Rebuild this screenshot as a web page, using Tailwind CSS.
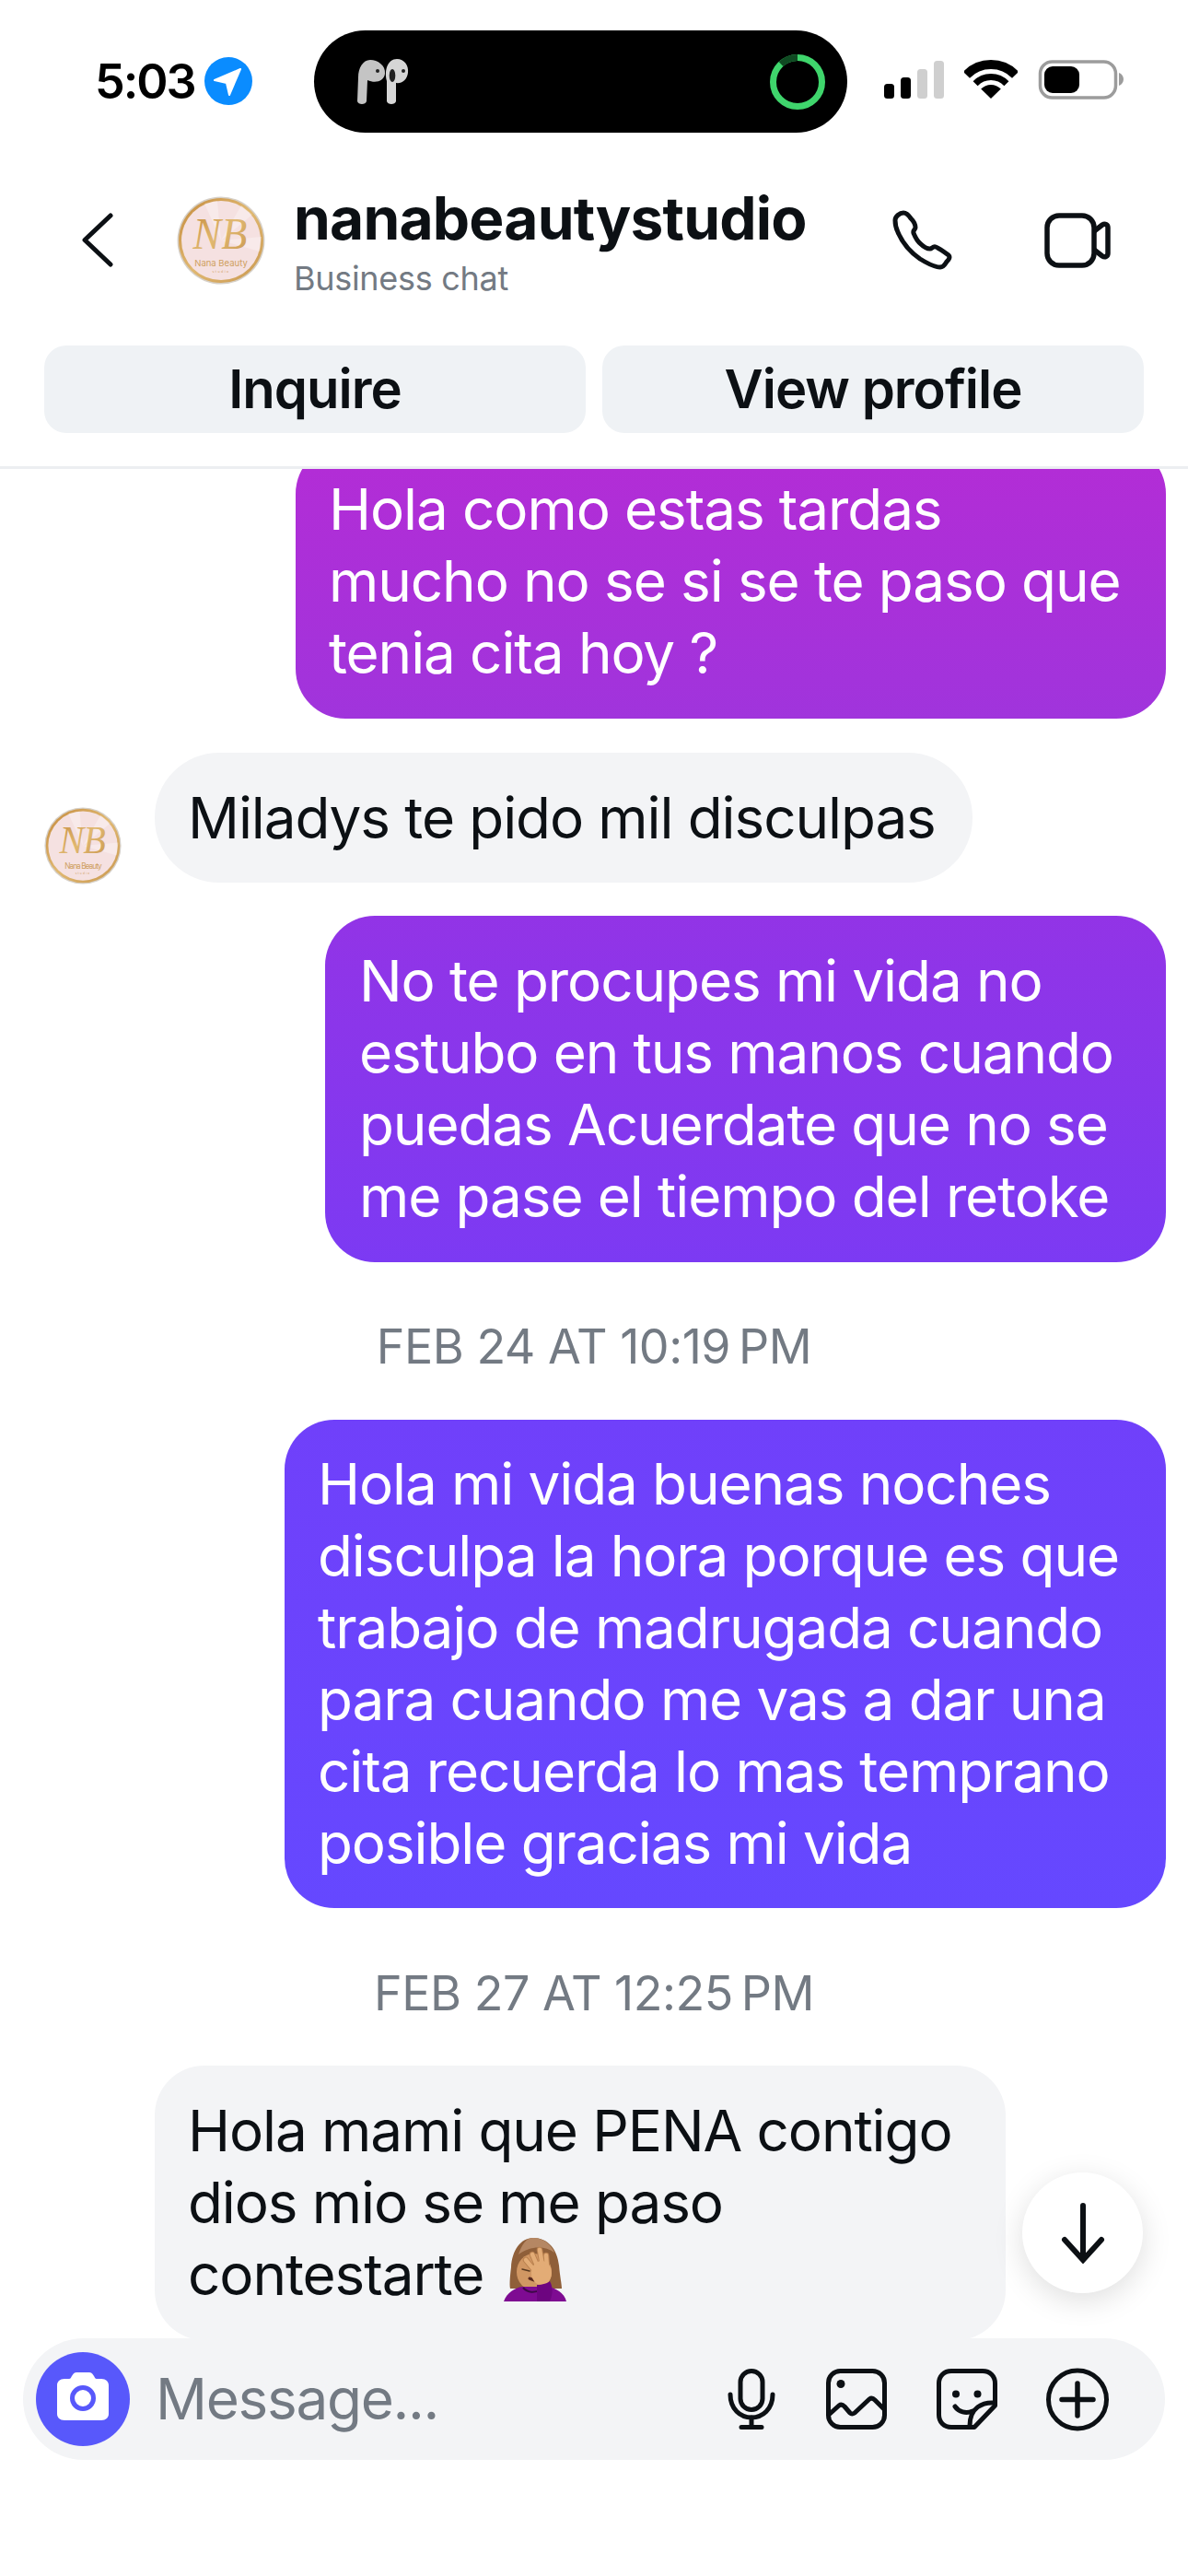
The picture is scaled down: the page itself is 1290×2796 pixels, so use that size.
<!DOCTYPE html>
<html lang="en">
<head>
<meta charset="UTF-8">
<meta name="viewport" content="width=device-width, initial-scale=1.0">
<title>nanabeautystudio</title>
<script src="https://cdn.jsdelivr.net/npm/@tailwindcss/browser@4"></script>
</head>
<body class="bg-white font-['Inter',sans-serif] text-[#0c1014]">

<div class="relative w-[1290px] h-[2796px] overflow-hidden bg-white">

  <!-- Status bar -->
  <div class="h-[170px] flex items-start">
    <div class="w-[341px] pl-[103px] pt-[61px] flex items-center">
      <span class="w-[107px] pt-[2px] text-[52px] font-semibold leading-[52px] tracking-[-2px] text-black">5:03</span>
      <svg class="ml-[12px] w-[52px] h-[52px]" viewBox="0 0 52 52"><circle cx="26" cy="26" r="26" fill="#0a8cff"/><path d="M39 13 L11 25 L24 28 L27 41 Z" fill="#fff" stroke="#fff" stroke-width="2" stroke-linejoin="round"/></svg>
    </div>
    <div class="mt-[33px] w-[579px] h-[111px] rounded-[56px] bg-black flex items-center justify-between pl-[47px] pr-[24px]">
      <svg class="w-[56px] h-[50px]" viewBox="0 0 56 50">
        <path d="M0 46 L1 20 C1 10 6 1 14 1 C22 1 31 7 30 16 C29 24 20 27 11 23 L10 46 C9 50 1 50 0 46Z" fill="#c4c4c4"/>
        <path d="M32 46 L32 24 C29 12 33 0 43 0 C51 0 56 7 55 15 C54 23 48 27 42 26 L42 46 C41 50 33 50 32 46Z" fill="#d6d6d6"/>
        <ellipse cx="38" cy="18" rx="3.300" ry="7" fill="#222"/><circle cx="50" cy="13" r="2" fill="#222"/><circle cx="22" cy="13" r="2" fill="#222"/>
      </svg>
      <svg class="w-[60px] h-[60px]" viewBox="0 0 60 60">
        <circle cx="30" cy="30" r="26.500" fill="none" stroke="#3fd56c" stroke-width="7"/>
        <path d="M30 3.500 A26.500 26.500 0 0 0 12 10.500" fill="none" stroke="#0f4a22" stroke-width="7"/>
      </svg>
    </div>
    <div class="flex-1 pl-[40px] pt-[65px] flex items-start">
      <svg class="mt-[1px] w-[65px] h-[41px]" viewBox="0 0 65 41">
        <rect x="0" y="25" width="11" height="16" rx="3.500" fill="#000"/>
        <rect x="18" y="18" width="11" height="23" rx="3.500" fill="#000"/>
        <rect x="36" y="9" width="11" height="32" rx="3.500" fill="#cfcfcf"/>
        <rect x="54" y="0" width="11" height="41" rx="3.500" fill="#cfcfcf"/>
      </svg>
      <svg class="ml-[22px] w-[58px] h-[42px]" viewBox="0 0 58 42">
        <path d="M2.400 16.300 A37 37 0 0 1 55.600 16.300" fill="none" stroke="#000" stroke-width="10"/>
        <path d="M12.100 25.700 A23.500 23.500 0 0 1 45.900 25.700" fill="none" stroke="#000" stroke-width="7"/>
        <path d="M29 42 L18.200 31.600 A15 15 0 0 1 39.800 31.600 Z" fill="#000"/>
      </svg>
      <svg class="ml-[22px] w-[93px] h-[43px]" viewBox="0 0 93 43">
        <rect x="2.500" y="2" width="82" height="39" rx="13" fill="none" stroke="#9c9c9c" stroke-width="3.500"/>
        <rect x="7" y="7" width="38" height="29" rx="9" fill="#000"/>
        <path d="M88 14 C91 15 93 18 93 21 C93 24 91 27 88 28Z" fill="#9c9c9c"/>
      </svg>
    </div>
  </div>

  <!-- Header -->
  <div class="h-[205px] flex items-start pl-[89px] pr-[84px]">
    <svg class="mt-[61px] w-[34px] h-[59px] shrink-0" viewBox="0 0 34 59"><path d="M31 3 L3 29.500 L31 56" fill="none" stroke="#0c1014" stroke-width="5" stroke-linecap="round" stroke-linejoin="round"/></svg>
    <svg class="mt-[43px] ml-[69px] w-[96px] h-[96px] shrink-0" viewBox="0 0 96 96">
      <defs>
        <linearGradient id="gold" x1="0" y1="0" x2="1" y2="1">
          <stop offset="0" stop-color="#c48a3c"/>
          <stop offset="0.5" stop-color="#e0b871"/>
          <stop offset="1" stop-color="#c9974e"/>
        </linearGradient>
      </defs>
      <circle cx="48" cy="48" r="47.500" fill="#d6d0c8"/>
      <circle cx="48" cy="48" r="46" fill="url(#gold)"/>
      <circle cx="48" cy="48" r="43" fill="#f5e1e1"/>
      <path d="M48 48 L30 8 L44 5Z M48 48 L70 10 L82 20Z M48 48 L92 44 L90 60Z" fill="#fff" opacity="0.3"/>
      <text transform="translate(47 57) scale(1.150 1.200)" text-anchor="middle" font-family="'Liberation Serif'" font-style="italic" font-size="40" fill="url(#gold)">NB</text>
      <text x="48" y="76" text-anchor="middle" font-family="Inter" font-size="9.500" fill="#cf9f5e">Nana Beauty</text>
      <text x="48" y="83" text-anchor="middle" font-family="Inter" font-size="3.500" letter-spacing="1.500" fill="#cf9f5e">studio</text>
    </svg>
    <div class="ml-[31px] pt-[31px] flex-1">
      <div class="text-[64px] leading-[72px] font-bold tracking-[-0.800px]">nanabeautystudio</div>
      <div class="mt-[8px] text-[36px] leading-[42px] tracking-[-0.300px] text-[#737a83]">Business chat</div>
    </div>
    <svg class="mt-[58px] w-[66px] h-[65px] shrink-0" viewBox="0 0 66 65"><path d="M12 3 C16 3 18 6 20 9 C23 12 25 16 25 19 C25 21 22 22 23 25 C25 30 27 34 31 37 C34 40 38 42 41 42 C43 42 44 39 47 40 C52 42 57 46 61 49 C63 51 61 54 59 56 C57 59 56 62 52 62 C46 62 38 58 30 53 C20 46 11 36 6 24 C4 20 3 15 3 11 C3 7 8 3 12 3Z" fill="none" stroke="#0c1014" stroke-width="5" stroke-linejoin="round"/></svg>
    <svg class="mt-[61px] ml-[99px] w-[72px] h-[60px] shrink-0" viewBox="0 0 72 60"><rect x="3" y="3" width="51" height="54" rx="13" fill="none" stroke="#0c1014" stroke-width="5.500"/><path d="M54 20 L63 13 C66 11 69 13 69 16 L69 44 C69 47 66 49 63 47 L54 40" fill="none" stroke="#0c1014" stroke-width="5.500" stroke-linejoin="round"/></svg>
  </div>

  <!-- Action buttons -->
  <div class="flex gap-[18px] px-[48px]">
    <div class="w-[588px] h-[95px] rounded-[24px] bg-[#eff2f5] flex items-center justify-center text-[58px] font-semibold tracking-[-1px]">Inquire</div>
    <div class="w-[588px] h-[95px] rounded-[24px] bg-[#eff2f5] flex items-center justify-center text-[58px] font-semibold tracking-[-1px]">View profile</div>
  </div>
  <div class="mt-[36px] border-t-[3px] border-[#eceef1]"></div>

  <!-- Messages -->
  <div class="relative h-[2029px] overflow-hidden">
    <div class="flex flex-col text-[62px] leading-[78px] tracking-[-1.100px]">
      <div class="-mt-[27px] self-end mr-[24px] w-[945px] rounded-[54px] px-[36px] py-[32px] text-white bg-[linear-gradient(180deg,#b22dd6_508px,#a034dc_780px,#9234e6_994px,#7c3af3_1370px,#7040fa_1541px,#6548ff_2072px)] bg-fixed">
        Hola como estas tardas<br>mucho no se si se te paso que<br>tenia cita hoy ?
      </div>
      <div class="mt-[37px] flex items-end pl-[48px]">
        <svg class="-mb-[2px] w-[84px] h-[84px] shrink-0" viewBox="0 0 96 96">
          <circle cx="48" cy="48" r="47.500" fill="#d6d0c8"/>
          <circle cx="48" cy="48" r="46" fill="url(#gold)"/>
          <circle cx="48" cy="48" r="43" fill="#f5e1e1"/>
          <path d="M48 48 L30 8 L44 5Z M48 48 L70 10 L82 20Z M48 48 L92 44 L90 60Z" fill="#fff" opacity="0.3"/>
          <text transform="translate(47 57) scale(1.150 1.200)" text-anchor="middle" font-family="'Liberation Serif'" font-style="italic" font-size="40" fill="url(#gold)">NB</text>
          <text x="48" y="76" text-anchor="middle" font-family="Inter" font-size="9.500" fill="#cf9f5e">Nana Beauty</text>
          <text x="48" y="83" text-anchor="middle" font-family="Inter" font-size="3.500" letter-spacing="1.500" fill="#cf9f5e">studio</text>
        </svg>
        <div class="ml-[36px] w-[888px] h-[141px] rounded-[70px] bg-[#f3f4f6] px-[36px] flex items-center whitespace-nowrap">Miladys te pido mil disculpas</div>
      </div>
      <div class="mt-[36px] self-end mr-[24px] w-[913px] rounded-[54px] px-[37px] py-[32px] text-white bg-[linear-gradient(180deg,#b22dd6_508px,#a034dc_780px,#9234e6_994px,#7c3af3_1370px,#7040fa_1541px,#6548ff_2072px)] bg-fixed">
        No te procupes mi vida no<br>estubo en tus manos cuando<br>puedas Acuerdate que no se<br>me pase el tiempo del retoke
      </div>
      <div class="h-[171px] pt-[12px] flex items-center justify-center text-[52px] tracking-[-0.500px] text-[#737a83]">FEB 24 AT 10:19&#8201;PM</div>
      <div class="self-end mr-[24px] w-[957px] rounded-[54px] px-[36px] py-[31px] text-white bg-[linear-gradient(180deg,#b22dd6_508px,#a034dc_780px,#9234e6_994px,#7c3af3_1370px,#7040fa_1541px,#6548ff_2072px)] bg-fixed">
        Hola mi vida buenas noches<br>disculpa la hora porque es que<br>trabajo de madrugada cuando<br>para cuando me vas a dar una<br>cita recuerda lo mas temprano<br>posible gracias mi vida
      </div>
      <div class="h-[171px] pt-[14px] flex items-center justify-center text-[52px] tracking-[-0.500px] text-[#737a83]">FEB 27 AT 12:25&#8201;PM</div>
      <div class="ml-[168px] w-[924px] rounded-[54px] bg-[#f3f4f6] px-[36px] py-[32px]">
        Hola mami que PENA contigo<br>dios mio se me paso<br><span class="inline-flex items-center">contestarte
          <svg class="ml-[22px] -translate-y-[6px] w-[69px] h-[69px]" viewBox="0 0 69 69">
            <path d="M32 0 C48 0 58 12 60 30 C61 42 63 50 63 55 L7 55 C6 50 7 40 8 32 C9 14 18 0 32 0Z" fill="#8f5f39"/>
            <path d="M32 0 C44 0 52 8 55 16 C44 8 28 9 16 18 C20 7 24 0 32 0Z" fill="#b58763"/>
            <ellipse cx="33" cy="37" rx="19" ry="20" fill="#d19763"/>
            <path d="M0 69 C3 60 12 54 20 53 L48 53 C56 54 66 60 68 69Z" fill="#7e0b92"/>
            <path d="M21 54 C26 60 34 60 40 56" fill="none" stroke="#3d0a47" stroke-width="2"/>
            <path d="M20 34 L28 36" stroke="#5a3a20" stroke-width="1.500" stroke-linecap="round"/>
            <path d="M28 44 L33 46" stroke="#5a2a20" stroke-width="3" stroke-linecap="round"/>
            <path d="M34 36 L24 24 M37 32 L31 18 M42 30 L39 13 M47 32 L46 19" stroke="#b9814f" stroke-width="6.500" stroke-linecap="round"/>
            <ellipse cx="41" cy="38" rx="11" ry="13" fill="#e3ac76"/>
            <path d="M34 36 L24 24 M37 32 L31 18 M42 30 L39 13 M47 32 L46 19" stroke="#e3ac76" stroke-width="4.500" stroke-linecap="round"/>
            <path d="M36 51 C42 51 48 49 50 47 C54 54 53 62 50 69 L36 69Z" fill="#6d0580"/>
          </svg>
        </span>
      </div>
    </div>

    <!-- scroll to bottom -->
    <div class="absolute left-[1110px] top-[1849px] w-[131px] h-[131px] rounded-full bg-white shadow-[0_8px_32px_rgba(0,0,0,0.13)] flex items-center justify-center">
      <svg class="w-[48px] h-[66px]" viewBox="0 0 48 66"><path d="M24 3 L24 60 M4 40 L24 62 L44 40" fill="none" stroke="#0c1014" stroke-width="6" stroke-linecap="round"/></svg>
    </div>
  </div>

  <!-- Message composer -->
  <div class="ml-[25px] w-[1240px] h-[132px] rounded-[66px] bg-[#f3f4f6] flex items-center pl-[14px] pr-[61px]">
    <svg class="w-[102px] h-[102px] shrink-0" viewBox="0 0 102 102">
      <circle cx="51" cy="51" r="51" fill="#5858fb"/>
      <path d="M31 29 L36 29 C38 29 38 27 40 24.500 C41 23 42 22 44 22 L58 22 C60 22 61 23 62 24.500 C64 27 64 29 66 29 L71 29 C76 29 79 32 79 36 L79 67 C79 71 76 74 71 74 L31 74 C26 74 23 71 23 67 L23 36 C23 32 26 29 31 29Z" fill="#fff"/>
      <circle cx="51" cy="50" r="11.500" fill="#fff" stroke="#5858fb" stroke-width="5"/>
    </svg>
    <span class="ml-[28px] flex-1 text-[62px] leading-none tracking-[-1.300px] text-[#737a83]">Message...</span>
    <svg class="w-[52px] h-[66px] shrink-0" viewBox="0 0 52 66" fill="none" stroke="#0c1014" stroke-width="5" stroke-linecap="round">
      <rect x="14" y="2.500" width="24" height="42" rx="12"/>
      <path d="M3 28 C3 44 14 53 26 53 C38 53 49 44 49 28"/>
      <path d="M26 53 V63 M15 63.500 H37"/>
    </svg>
    <svg class="ml-[55px] w-[66px] h-[66px] shrink-0" viewBox="0 0 66 66" fill="none" stroke="#0c1014" stroke-width="5" stroke-linecap="round" stroke-linejoin="round">
      <rect x="2.500" y="2.500" width="61" height="61" rx="13"/>
      <circle cx="16" cy="16.500" r="4.500" fill="#0c1014" stroke="none"/>
      <path d="M4 49 L14 40 Q17 38 20 41 L26 48 Q28 50 31 48 L47 33 Q50 31 53 34 L63 44"/>
    </svg>
    <svg class="ml-[54px] w-[66px] h-[66px] shrink-0" viewBox="0 0 66 66" fill="none" stroke="#0c1014" stroke-width="5" stroke-linecap="round" stroke-linejoin="round">
      <path d="M16 2.500 H50 C58 2.500 63.500 8 63.500 16 V40 L41 63.500 H16 C8 63.500 2.500 58 2.500 50 V16 C2.500 8 8 2.500 16 2.500Z"/>
      <path d="M63 37 C50 36 36 42 36 62"/>
      <path d="M20 41 C24 47 32 49 39 46"/>
      <circle cx="21" cy="27.500" r="4" fill="#0c1014" stroke="none"/>
      <circle cx="44.500" cy="27.500" r="4" fill="#0c1014" stroke="none"/>
    </svg>
    <svg class="ml-[53px] w-[68px] h-[69px] shrink-0" viewBox="0 0 68 69" fill="none" stroke="#0c1014" stroke-width="5" stroke-linecap="round">
      <circle cx="34" cy="34.500" r="31.500"/>
      <path d="M17 34.500 H51 M34 17 V52" stroke-width="5.500"/>
    </svg>
  </div>
</div>
</body>
</html>
